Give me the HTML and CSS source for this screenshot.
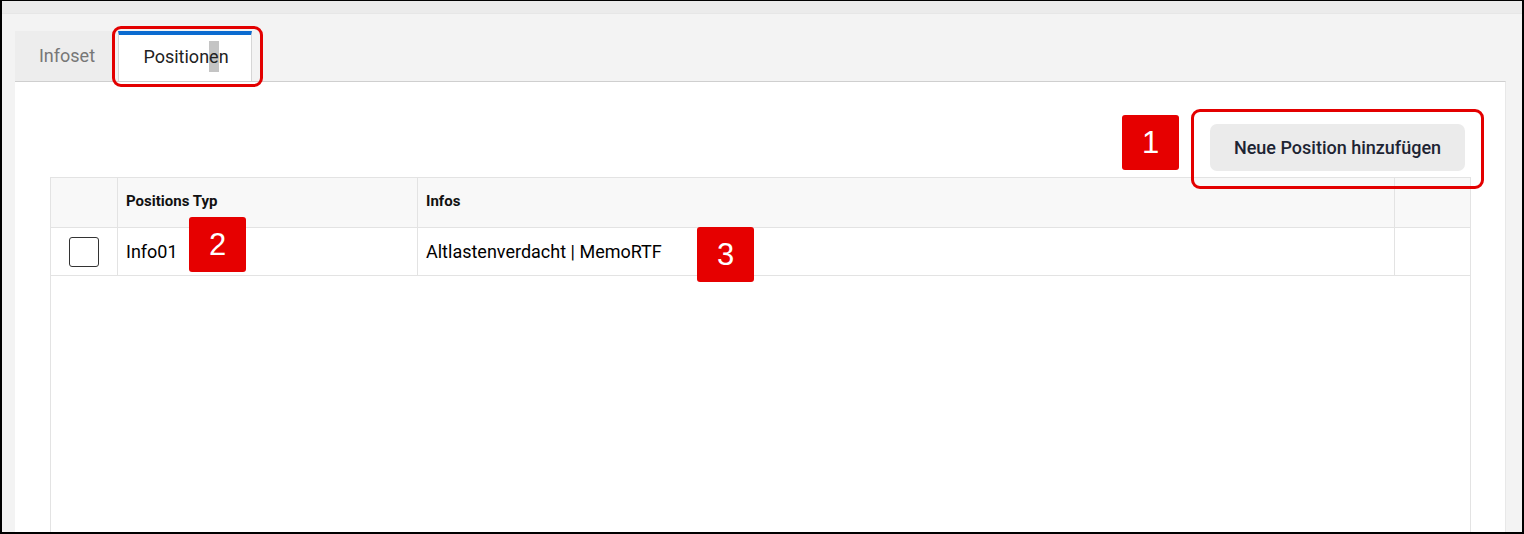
FILE: index.html
```html
<!DOCTYPE html>
<html lang="de">
<head>
  <meta charset="UTF-8">
  <title>Positionen</title>
  <link rel="stylesheet" href="styles.css">
</head>
<body>
  <div class="frame">
    <div class="topstrip"></div>
    <div class="workspace">
      <div class="tabs">
        <div class="tab">Infoset</div>
        <div class="tab active">Position<span class="caret">e</span>n</div>
      </div>
      <div class="panel">
        <div class="toolbar">
          <button class="btn">Neue Position hinzufügen</button>
        </div>
        <div class="grid">
          <table>
            <tr class="head">
              <th class="c-check"></th>
              <th class="c-typ">Positions Typ</th>
              <th class="c-info">Infos</th>
              <th class="c-end"></th>
            </tr>
            <tr>
              <td class="c-check"><span class="box"></span></td>
              <td>Info01</td>
              <td>Altlastenverdacht | MemoRTF</td>
              <td></td>
            </tr>
          </table>
        </div>
      </div>
    </div>

    <div class="mark mark-tab"></div>
    <div class="mark mark-btn"></div>
    <div class="badge b1">1</div>
    <div class="badge b2">2</div>
    <div class="badge b3">3</div>
  </div>
</body>
</html>
```

FILE: styles.css
```css
body {
  margin: 0;
  font-family: Roboto, "Noto Sans", sans-serif;
}

.frame {
  position: relative;
  width: 1524px;
  height: 534px;
  box-sizing: border-box;
  border: 2px solid #000;
  border-top-width: 1px;
  overflow: hidden;
  background: #f3f3f3;
  display: flex;
  flex-direction: column;
}

.topstrip {
  height: 12px;
  background: #ebebeb;
  border-bottom: 1px solid #e6e6e6;
}

.workspace {
  flex: 1;
  display: flex;
  flex-direction: column;
  padding: 17px 16px 0 13px;
}

.tabs {
  display: flex;
  gap: 5px;
  height: 50px;
}

.tab {
  width: 98px;
  box-sizing: border-box;
  background: #ededed;
  color: #777;
  font-size: 18px;
  display: flex;
  align-items: center;
  justify-content: center;
  padding: 0 0 2px 6px;
}

.tab.active {
  width: 134px;
  background: #fff;
  color: #222;
  border-top: 4px solid #0b6bd0;
  border-left: 1px solid #d6d6d6;
  border-right: 1px solid #d6d6d6;
  padding: 0 0 3px 2px;
}

.caret {
  background: #c4c4c4;
  padding: 5px 0 5px;
}

.panel {
  flex: 1;
  background: #fff;
  border-top: 1px solid #cfcfcf;
  border-right: 1px solid #e8e8e8;
  padding: 42px 34px 0 35px;
  display: flex;
  flex-direction: column;
}

.toolbar {
  display: flex;
  justify-content: flex-end;
  padding-right: 6px;
  margin-bottom: 6px;
}

.btn {
  width: 255px;
  height: 47px;
  border: none;
  border-radius: 7px;
  background: #ebebeb;
  color: #1d2433;
  font-family: Roboto, sans-serif;
  font-size: 18px;
  font-weight: 500;
}

.grid {
  flex: 1;
  border: 1px solid #e3e3e3;
  border-bottom: none;
}

table {
  width: 100%;
  border-collapse: collapse;
}

th, td {
  border-right: 1px solid #e3e3e3;
  border-bottom: 1px solid #e3e3e3;
  text-align: left;
  padding: 0 8px;
}

th:last-child, td:last-child {
  border-right: none;
}

.head th {
  height: 45px;
  background: #f8f8f8;
  font-size: 15px;
  font-weight: 700;
  color: #111;
  padding-bottom: 4px;
}

td {
  height: 47px;
  font-size: 18px;
  font-weight: 400;
  color: #000;
}

.c-check {
  width: 50px;
  text-align: center;
}

.c-typ {
  width: 283px;
}

.c-end {
  width: 59px;
}

.box {
  display: inline-block;
  width: 28px;
  height: 28px;
  border: 1px solid #333;
  border-radius: 3px;
  vertical-align: middle;
}

.mark {
  position: absolute;
  border: 3px solid #e30000;
  border-radius: 9px;
  box-sizing: border-box;
}

.mark-tab {
  left: 110px;
  top: 25px;
  width: 151px;
  height: 61px;
}

.mark-btn {
  left: 1189px;
  top: 108px;
  width: 293px;
  height: 80px;
}

.badge {
  position: absolute;
  width: 57px;
  height: 55px;
  background: #e60000;
  border-radius: 3px;
  color: #fff;
  font-family: "Liberation Sans", Arial, sans-serif;
  font-size: 31px;
  display: flex;
  align-items: center;
  justify-content: center;
}

.b1 { left: 1120px; top: 114px; }
.b2 { left: 187px; top: 216px; }
.b3 { left: 695px; top: 226px; }
```
